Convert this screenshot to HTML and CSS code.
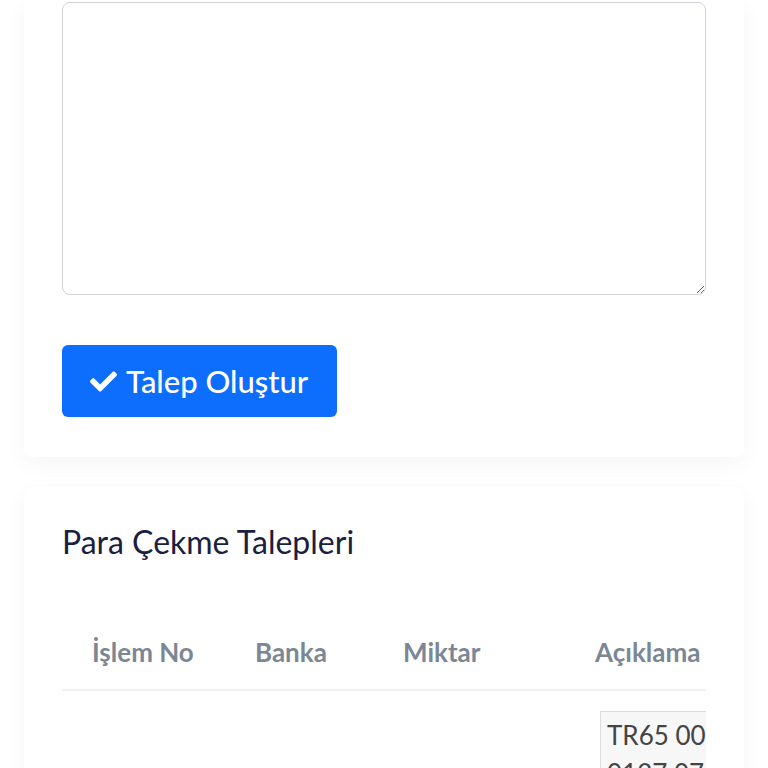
FILE: index.html
```html
<!DOCTYPE html>
<html lang="tr">
<head>
<meta charset="utf-8">
<title>Para Çekme</title>
<link rel="stylesheet" href="styles.css">
</head>
<body>
<div class="page">
  <section class="card card-form">
    <textarea class="field"></textarea>
    <button class="btn-primary" type="button">
      <svg class="check" viewBox="0 0 512 512" aria-hidden="true"><path d="M173.9 439.4L7.5 273c-10-10-10-26.2 0-36.2l36.2-36.2c10-10 26.2-10 36.2 0L192 312.7 432.1 72.6c10-10 26.2-10 36.2 0l36.2 36.2c10 10 10 26.2 0 36.2L210.1 439.4c-10 10-26.2 10-36.2 0z" fill="currentColor"/></svg>
      <span>Talep Oluştur</span>
    </button>
  </section>
  <section class="card card-list">
    <h2 class="title">Para Çekme Talepleri</h2>
    <div class="table-wrap">
      <table class="tbl">
        <thead>
          <tr>
            <th class="c1">İşlem No</th>
            <th class="c2">Banka</th>
            <th class="c3">Miktar</th>
            <th class="c4">Açıklama</th>
          </tr>
        </thead>
        <tbody>
          <tr>
            <td></td>
            <td></td>
            <td></td>
            <td><div class="note">TR65 0006 0127 0760 1234 56</div></td>
          </tr>
        </tbody>
      </table>
    </div>
  </section>
</div>
</body>
</html>
```
FILE: styles.css
```css
html, body {
  margin: 0;
  padding: 0;
  background: #ffffff;
  font-family: Lato, "Open Sans", "Liberation Sans", sans-serif;
}
.page {
  padding: 0 24px 40px;
  display: flex;
  flex-direction: column;
  gap: 30px;
}
.card {
  background: #fff;
  border-radius: 8px;
  box-shadow: 0 6px 22px rgba(0, 0, 0, 0.045);
  padding: 0 38px 40px;
}
.card-form {
  border-top-left-radius: 0;
  border-top-right-radius: 0;
  padding-top: 2px;
  display: flex;
  flex-direction: column;
  align-items: flex-start;
  gap: 50px;
}
.field {
  display: block;
  box-sizing: border-box;
  width: 644px;
  height: 293px;
  border: 1px solid #cfd2d6;
  border-radius: 8px;
  background: #fff;
  margin: 0;
  font: inherit;
}
.btn-primary {
  display: flex;
  align-items: center;
  gap: 9px;
  box-sizing: border-box;
  width: 275px;
  height: 72px;
  padding: 0 0 0 28px;
  border: 0;
  border-radius: 6px;
  background: #0d6efd;
  color: #fff;
  font-family: Lato, "Open Sans", sans-serif;
  font-size: 31px;
  font-weight: 500;
}
.check {
  width: 27px;
  height: 27px;
}
.card-list {
  padding-top: 36px;
  overflow: hidden;
}
.title {
  margin: 0;
  font-size: 32px;
  font-weight: 400;
  color: #1a2040;
  line-height: 38px;
}
.table-wrap {
  margin-top: 58px;
  width: 644px;
  overflow: hidden;
}
.tbl {
  border-collapse: collapse;
  table-layout: fixed;
  width: 780px;
}
.tbl th {
  text-align: left;
  font-size: 26px;
  font-weight: 700;
  color: #7b8794;
  padding: 18px 0 22px 30px;
  border-bottom: 2px solid #f0f1f3;
  line-height: 30px;
  white-space: nowrap;
}
.tbl .c1 { width: 133px; }
.tbl .c2 { width: 118px; }
.tbl .c3 { width: 162px; }
.tbl .c4 { width: 247px; }
.tbl td {
  padding: 20px 0 0 35px;
  vertical-align: top;
}
.note {
  box-sizing: border-box;
  width: 200px;
  border: 1px solid #dcdcdc;
  background: #f7f7f7;
  padding: 4px 6px;
  font-size: 26px;
  line-height: 38px;
  color: #444;
}
```
